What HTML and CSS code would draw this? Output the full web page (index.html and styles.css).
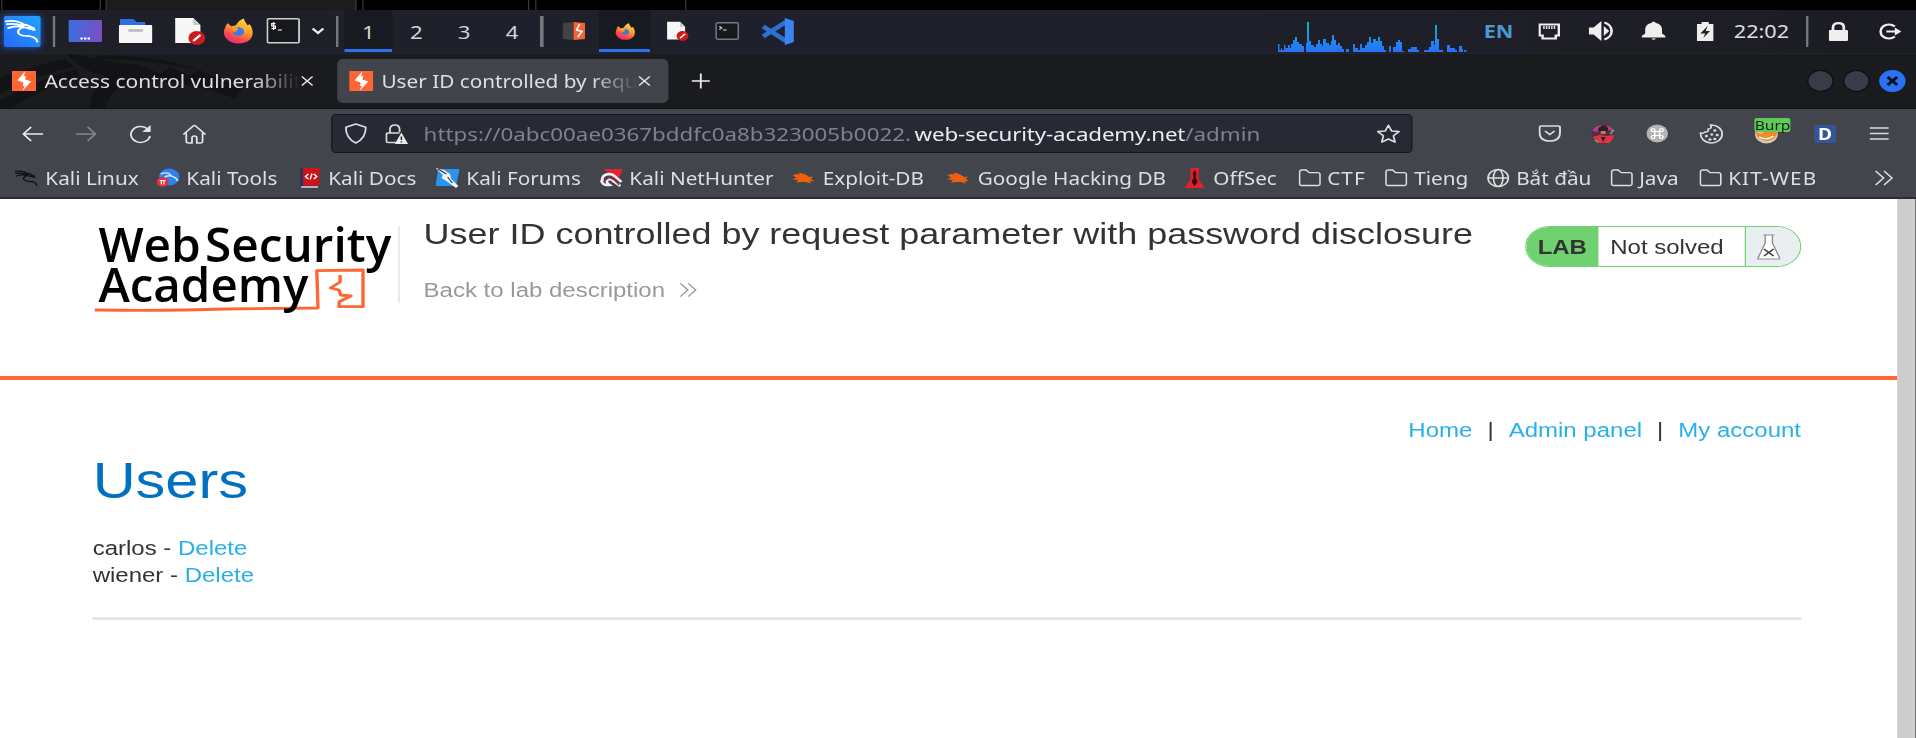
FILE: index.html
```
<!DOCTYPE html>
<html lang="en">
<head>
<meta charset="utf-8">
<title>User ID controlled by request parameter with password disclosure</title>
<link rel="stylesheet" href="styles.css">
</head>
<body>
<svg width="0" height="0" class="defs">
  <defs>
    <linearGradient id="flame" x1="0.8" y1="0" x2="0.3" y2="1"><stop offset="0" stop-color="#ffe04a"/><stop offset=".45" stop-color="#ff9a2c"/><stop offset=".75" stop-color="#ff4a48"/><stop offset="1" stop-color="#e02a78"/></linearGradient>
    <linearGradient id="desk" x1="0" y1="0" x2="1" y2="0"><stop offset="0" stop-color="#3a6fe0"/><stop offset="1" stop-color="#7b4fc0"/></linearGradient>
    <linearGradient id="kali" x1="1" y1="0" x2="0" y2="1"><stop offset="0" stop-color="#22a4ff"/><stop offset="1" stop-color="#2468f8"/></linearGradient>
    <linearGradient id="cpu" x1="0" y1="0" x2="0" y2="30" gradientUnits="userSpaceOnUse"><stop offset="0" stop-color="#12b3b8"/><stop offset=".6" stop-color="#1c8cf0"/><stop offset="1" stop-color="#2a6ff5"/></linearGradient>
    <symbol id="dragon" viewBox="0 0 30 24">
      <path d="M1 2C7 1 13 2 17 6M2 5C7 4 12 5 16 7M3 9C7 7 12 7 15 8M15 5C19 5 23 8 26 11L21 9.5C18 8 14 8 12 11C10 15 14 17 18 17C23 17 27 18 28 23M22 8L25 9" fill="none" stroke="currentColor" stroke-width="1.9" stroke-linecap="round"/>
    </symbol>
    <symbol id="firefox" viewBox="0 0 28 28">
      <path d="M5 6L8 9L12 8C14 4 16 2 19 1C19 4 21 5 22 8L24 7C29 15 27 27 14 27C4 27-1 17 3 10C3 9 4 7 5 6Z" fill="url(#flame)"/>
      <path d="M10 12C14 8 20 11 19 16C18 20 11 20 9 16L13 14Z" fill="#3a7bea"/>
      <path d="M8 10L13 9L14 13L9 14Z" fill="#ff9a2c"/>
    </symbol>
    <symbol id="note" viewBox="0 0 26 28">
      <path d="M1 1H16L22 8V26H1Z" fill="#f7f7f7"/><path d="M16 1V8H22Z" fill="#c9c9c9"/>
      <circle cx="19" cy="21" r="7" fill="#d0191c"/><path d="M16 24L22 18" stroke="#fff" stroke-width="2"/>
    </symbol>
    <symbol id="burp" viewBox="0 0 20 20">
      <path d="M0 0H20V20H0Z" fill="#ff6633"/>
      <path d="M11 0L4.500 9.500L9.500 11.500L9 15H10.500L8.500 20L16 10.500L11 8.500L11.500 5H10Z" fill="#fff"/>
    </symbol>
    <symbol id="folder" viewBox="0 0 19 18">
      <path d="M1 15V3Q1 1 3 1H6.5L9 3.6H16Q18 3.6 18 5.6V15Q18 16.5 16.5 16.5H2.5Q1 16.5 1 15Z" fill="none" stroke="#dededf" stroke-width="1.3"/>
    </symbol>
    <symbol id="bug" viewBox="0 0 18 16">
      <path d="M3 4L6 4.500L5 2.500L10 4L14 7L17 6.500L15.500 9L18 11.500L14.500 11L15.500 13.500L11 12L7 12L3 12.500L4.500 10L0 9.500L3 7.500L0 5.500Z" fill="#ee6010"/>
    </symbol>
    <symbol id="close" viewBox="0 0 12 12"><path d="M1.500 1.500L10.500 10.500M10.500 1.500L1.500 10.500" stroke="#e4e4e5" stroke-width="1.200"/></symbol>
    <symbol id="more" viewBox="0 0 16 16"><path d="M1 1L7.700 8L1 15M8 1L14.700 8L8 15" fill="none" stroke="currentColor" stroke-width="1.300"/></symbol>
  </defs>
</svg>
<div class="screen">
  <div class="strip"><i class="s1"></i><i class="s2"></i><i class="s3"></i><i class="s4"></i></div>

  <div class="panel">
    <div class="cell"><svg class="kali" width="31" height="31" viewBox="0 0 31 31"><path d="M0 0H31V31H0Z" fill="url(#kali)"/><use href="#dragon" x="1" y="1" width="29" height="28"/></svg></div>
    <div class="cell"><b class="sep"></b></div>
    <div class="cell"><svg width="28" height="22"><rect width="28" height="22" rx="1" fill="url(#desk)"/><path d="M10 18.500H18" stroke="#fff" stroke-width="2" stroke-dasharray="2 1"/></svg></div>
    <div class="cell"><svg width="28" height="26" viewBox="0 0 28 26"><path d="M1 1H12L15 4H22V10H1Z" fill="#2f6fe4"/><rect y="7" width="28" height="18" rx="1" fill="#f7f7f7"/><path d="M8 12.500H20" stroke="#b8b8b8" stroke-width="2.500"/></svg></div>
    <div class="cell"><svg width="26" height="28"><use href="#note"/></svg></div>
    <div class="cell"><svg width="27" height="28"><use href="#firefox"/></svg></div>
    <div class="cell"><svg width="28" height="26" viewBox="0 0 28 26"><rect x=".8" y=".8" width="26.400" height="24" rx="1" fill="#17181b" stroke="#d0d0d2" stroke-width="1.500"/><path d="M7.500 5.500H4.500V8H7.500V10.500H4.200M6 4V12M9.500 12H13" fill="none" stroke="#fff" stroke-width="1.100"/></svg></div>
    <div class="cell"><svg width="12" height="8"><path d="M1.500 1.500L6 6L10.500 1.500" fill="none" stroke="#eee" stroke-width="2"/></svg></div>
    <div class="cell"><b class="sep"></b></div>
    <div class="cell ws active">1</div>
    <div class="cell ws">2</div>
    <div class="cell ws">3</div>
    <div class="cell ws">4</div>
    <div class="cell"><b class="sep"></b></div>
    <div class="cell"><svg width="20" height="18"><path d="M1 1L10 0V18L1 17Z" fill="#424344"/><path d="M10 0L19.500 1V17L10 18Z" fill="#f96232"/><path d="M15 2L12.500 8L17 9.500L13.500 15" fill="none" stroke="#fff" stroke-width="1.400"/></svg></div>
    <div class="cell active"><svg width="18" height="19"><use href="#firefox"/></svg></div>
    <div class="cell"><svg width="19" height="20"><use href="#note"/></svg></div>
    <div class="cell"><svg width="20" height="18"><rect x=".7" y=".7" width="18.600" height="16.600" rx="1.500" fill="#17181b" stroke="#77787b" stroke-width="1.400"/><path d="M3.500 4.500L5.500 6L3.500 7.500M6.500 8H9.500" fill="none" stroke="#ddd"/></svg></div>
    <div class="cell"><svg width="28" height="27" viewBox="0 0 28 27"><path d="M2 8.500L21 23M2 18.500L21 4" stroke="#2c70d0" stroke-width="4.200"/><path d="M20 0L27.500 3V24L20 27Z" fill="#3a86ee"/></svg></div>
    <div class="cell"></div>
    <div class="cell start"><svg class="graph" viewBox="0 0 189 30" preserveAspectRatio="none"><path fill="url(#cpu)" d="M0 30V22H1.500V28H3V26H4V28H6V23H7.500V26H10V23H12V26H13V22H15V18H17V15H19V20H21V22H24V24H26V30H28V21H29V0H31V19H33V23H36V25H38V22H40V18H42V22H44V24H45V17H48V21H51V23H53V19H54V13H56V18H58V23H60V21H62V24H64V27H66V30H68V27H71V30H75V22H77V26H80V28H82V22H84V26H87V23H89V20H91V15H93V21H95V17H98V19H100V15H102V19H104V24H106V28H108V30H111V24H113V30H115V25H118V20H120V18H122V20H124V29H126V30H130V27H133V25H139V28H141V30H146V28H151V25H153V19H156V23H157V3H159V17H161V28H165V30H169V23H172V26H177V28H179V30H181V24H184V27H185V30H186V28H189V30Z"/></svg></div>
    <div class="cell lang">EN</div>
    <div class="cell"><svg width="18" height="17"><path d="M1 1.500H17V12.500H14.500V15.500H3.500V12.500H1Z" fill="none" stroke="#eee" stroke-width="2"/><path d="M4 4.500H14" stroke="#eee" stroke-width="3" stroke-dasharray="1.200 1"/></svg></div>
    <div class="cell"><svg width="22" height="20"><path d="M0 6.500H4L10.500 0V20L4 13.500H0Z" fill="#eee"/><path d="M12.500 5L17 10L12.500 15Z" fill="#eee"/><path d="M13 1.500A9 9 0 0 1 13 18.500" fill="none" stroke="#eee" stroke-width="2.200"/></svg></div>
    <div class="cell"><svg width="20" height="20" viewBox="-1 0 20 20"><path d="M-1 16.500V15L2 12.500V8Q2.500 3 7 2Q9-1 11 2Q15.500 3 16 8V12.500L19 15V16.500ZM7 17.500H11Q9 20 7 17.500Z" fill="#eee"/></svg></div>
    <div class="cell"><svg width="14" height="19"><path d="M0 2H4V0H10V2H14V19H0Z" fill="#eee"/><path d="M9 4L3 11.500H7L5.500 16L11 9H7.500Z" fill="#1e1f27"/></svg></div>
    <div class="cell clock">22:02</div>
    <div class="cell"><b class="sep"></b></div>
    <div class="cell"><svg width="16" height="19"><path d="M3.500 9V5.500Q3.500 1.200 8 1.200T12.500 5.500V9" fill="none" stroke="#eee" stroke-width="2.300"/><rect y="8" width="16" height="11" rx="1" fill="#eee"/></svg></div>
    <div class="cell"></div>
    <div class="cell"><svg width="19" height="17"><path d="M13 3.500A7 7 0 1 0 13 13.500" fill="none" stroke="#eee" stroke-width="2.200"/><path d="M6 8.500H14" stroke="#eee" stroke-width="2.200"/><path d="M13 4.500L18.500 8.500L13 12.500Z" fill="#eee"/></svg></div>
  </div>

  <div class="tabs">
    <svg class="backdrop" width="220" height="54" viewBox="0 0 220 54"><path d="M0 24Q26 12 54 5L62 13Q30 20 0 40ZM0 47Q32 25 64 15L66 22Q38 32 10 54H0ZM56 0Q66 16 88 22Q78 32 74 54H88Q92 34 112 26Q160 26 196 45L202 34Q184 26 166 16L158 22L142 13L134 20L116 11Q84 7 64 0ZM80 2Q130 0 164 16Q130 6 80 5Z" fill="#121317"/></svg>
    <div class="tab first"><svg class="fav" width="20" height="20"><use href="#burp"/></svg><span class="label">Access control vulnerabilit</span><svg width="12" height="12"><use href="#close"/></svg></div>
    <div></div>
    <div class="tab current"><svg class="fav" width="20" height="20"><use href="#burp"/></svg><span class="label">User ID controlled by requ</span><svg width="12" height="12"><use href="#close"/></svg></div>
    <div class="cell"><svg width="16" height="16"><path d="M8 .5V15.500M.5 8H15.500" stroke="#f0f0f0" stroke-width="1.500"/></svg></div>
    <div></div>
    <div class="cell"><i class="dot"></i></div>
    <div class="cell"><i class="dot"></i></div>
    <div class="cell"><i class="dot blue"><svg width="12" height="12"><path d="M2 2L10 10M10 2L2 10" stroke="#0c1120" stroke-width="2.600"/></svg></i></div>
    <div></div>
  </div>

  <div class="toolbar">
    <div class="cell"><svg width="18" height="16"><path d="M18 8H1.500M8 1L1.500 8L8 15" fill="none" stroke="#ececec" stroke-width="1.500"/></svg></div>
    <div class="cell"><svg width="18" height="16"><path d="M0 8H16.500M10 1L16.500 8L10 15" fill="none" stroke="#85868b" stroke-width="1.500"/></svg></div>
    <div class="cell"><svg width="20" height="20"><path d="M15.500 4.500A8 8 0 1 0 18 12" fill="none" stroke="#e4e4e5" stroke-width="1.500"/><path d="M18.500 1V8H11.500Z" fill="#e4e4e5"/></svg></div>
    <div class="cell"><svg width="20" height="20"><path d="M.8 10.500L9 2Q10 1 11 2L19.200 10.500M3.200 9V17Q3.200 19 5 19H8V14Q8 12 10 12T12 14V19H15Q16.800 19 16.800 17V9" fill="none" stroke="#e4e4e5" stroke-width="1.500"/></svg></div>
    <div></div>
    <div class="urlbar">
      <div class="cell"><svg width="19" height="21"><path d="M9.500 1L17.800 4.200Q18 15 9.500 20Q1 15 1.200 4.200Z" fill="none" stroke="#dcdcde" stroke-width="1.500" stroke-linejoin="round"/></svg></div>
      <div class="cell"><svg width="19" height="20"><path d="M4 9V5.500Q4 1 8 1T12 5.500V8M9 18.500H2.500Q1 18.500 1 17V10.500Q1 9 2.500 9H12" fill="none" stroke="#dcdcde" stroke-width="1.500"/><path d="M13.500 8.500L19 20H8Z" fill="#eee"/><path d="M13.500 12.500V16M13.500 17.200V18.600" stroke="#272935" stroke-width="1.300"/></svg></div>
      <div class="url">https://0abc00ae0367bddfc0a8b323005b0022.<b>web-security-academy.net</b>/admin</div>
      <div class="cell"><svg width="20" height="20"><path d="M10 1.200L12.600 6.900L18.800 7.600L14.200 11.800L15.500 18.200L10 15L4.500 18.200L5.800 11.800L1.200 7.600L7.400 6.900Z" fill="none" stroke="#dcdcde" stroke-width="1.500" stroke-linejoin="round"/></svg></div>
    </div>
    <div></div>
    <div class="cell"><svg width="19" height="17"><path d="M2.500 1H16.500Q18 1 18 2.500V7.500Q18 16 9.500 16T1 7.500V2.500Q1 1 2.500 1ZM5.500 6L9.500 9.500L13.500 6" fill="none" stroke="#dcdcde" stroke-width="1.600"/></svg></div>
    <div class="cell"><svg width="20" height="20" viewBox="0 0 20 20"><circle cx="10" cy="10" r="9.800" fill="#5a2a48"/><path d="M1 7Q3 1 9 1L5 8ZM13 1Q19 4 19 8L14 6Z" fill="#b0407c"/><path d="M1 13L7 11L13 12L19 11Q19 15 15 19H5Z" fill="#e23140"/><path d="M8 5H12V10H8Z" fill="#b97a66"/><path d="M6 4Q10 0 14 4V7H6ZM8 13H12L10 18Z" fill="#2c1d26"/><path d="M16 10L19 6M3 16L6 18" stroke="#43b77c" stroke-width="1.500"/></svg></div>
    <div class="cell"><svg width="18" height="19" viewBox="0 0 18 18"><circle cx="9" cy="9" r="9" fill="#b4b4b4"/><path d="M7 7H11V11H7ZM7 7V5.500A1.500 1.500 0 1 0 5.500 7H7ZM11 7H12.500A1.500 1.500 0 1 0 11 5.500ZM11 11V12.500A1.500 1.500 0 1 0 12.500 11ZM7 11H5.500A1.500 1.500 0 1 0 7 12.500Z" fill="none" stroke="#fff" stroke-width="1.200"/></svg></div>
    <div class="cell"><svg width="20" height="20"><path d="M9.500 1A9 9 0 1 1 1.200 9Q3.500 10 4.500 8Q8 8.500 7.500 5Q11 5 9.500 1Z" fill="none" stroke="#dcdcde" stroke-width="1.500"/><g fill="#dcdcde"><circle cx="13" cy="6.500" r="1.300"/><circle cx="6" cy="12" r="1.300"/><circle cx="10.500" cy="10.500" r="1.200"/><circle cx="15" cy="11" r="1.300"/><circle cx="9" cy="15.500" r="1.300"/><circle cx="13" cy="15" r="1.300"/></g></svg></div>
    <div class="cell"><div class="proxy"><svg width="20" height="20"><circle cx="10" cy="10" r="9.500" fill="#d7c6aa"/><path d="M1 8L6 10L10 6L19 8Q19 15 10 17Q2 16 1 8Z" fill="#ef8a28"/><path d="M4 13Q10 17 16 12" fill="none" stroke="#fff" stroke-width="1.500"/></svg><span class="badge">Burp</span></div></div>
    <div class="cell"><span class="dmark">D</span></div>
    <div class="cell"><svg width="16" height="13"><path d="M0 1H16M0 6.500H16M0 12H16" stroke="#dcdcde" stroke-width="1.400"/></svg></div>
    <div></div>
  </div>

  <div class="bookmarks">
    <div class="bm"><svg class="ink" width="20" height="20"><use href="#dragon"/></svg><span>Kali Linux</span></div>
    <div class="bm"><svg width="20" height="20"><circle cx="11" cy="9" r="8.500" fill="#2f80ee"/><path d="M4 6Q10 3 13 8Q8 7 7 10M12 8Q17 9 18 13" fill="none" stroke="#cfe4ff" stroke-width="1.400"/><circle cx="5.500" cy="14" r="5" fill="#e03038"/><path d="M3 12.500H8M4.500 12.500V16.500M6.700 12.500V16.500" stroke="#fff"/></svg><span>Kali Tools</span></div>
    <div class="bm docs"><svg width="17" height="20"><path d="M0 0H4V18H0Z" fill="#28325e"/><path d="M2.500 0H16V17.500H2.500Z" fill="#d0131a"/><path d="M1 19H15" stroke="#ddd" stroke-width="1.500"/><path d="M7 6L4.500 8.500L7 11M11.500 6L14 8.500L11.500 11M10 5.500L8.500 11.500" fill="none" stroke="#fff" stroke-width="1.200"/></svg><span>Kali Docs</span></div>
    <div class="bm"><svg width="20" height="20"><path d="M2 1H20L17 18H0Z" fill="#2796f3"/><path d="M0 0L7 2L12 6L13 11L19 18L17 20L9 13L5 10L6 7Z" fill="#f4f4f4"/><path d="M2 1L9 6M10 9L14 15" stroke="#333"/></svg><span>Kali Forums</span></div>
    <div class="bm"><svg width="20" height="20"><path d="M4 1H20L16 13L11 8Z" fill="#e2232f"/><path d="M3 13Q2 7 8 6Q12 6 15 10L19 14M2 12Q3 18 9 17Q5 14 8 11Q11 11 13 14L18 18" fill="none" stroke="#f1f1f1" stroke-width="2.300"/><path d="M6 12Q8 8 13 12L17 17" fill="none" stroke="#b3132e" stroke-width="1.200"/></svg><span>Kali NetHunter</span></div>
    <div class="bm exploit"><svg width="19" height="16"><use href="#bug"/></svg><span>Exploit-DB</span></div>
    <div class="bm exploit"><svg width="19" height="16"><use href="#bug"/></svg><span>Google Hacking DB</span></div>
    <div class="bm exploit"><svg width="17" height="20"><path d="M5 0H12V12L17 20H0L5 12Z" fill="#e0202a"/><path d="M8.500 2L10 5L9.500 10L11 14L8.500 18L6 14L7.500 10L7 5Z" fill="#3a0a10"/></svg><span>OffSec</span></div>
    <div class="bm wide"><svg width="19" height="18"><use href="#folder"/></svg><span>CTF</span></div>
    <div class="bm"><svg width="19" height="18"><use href="#folder"/></svg><span>Tieng</span></div>
    <div class="bm"><svg width="19" height="20"><g fill="none" stroke="#dededf" stroke-width="1.400"><circle cx="9.500" cy="10" r="8.500"/><ellipse cx="9.500" cy="10" rx="4" ry="8.500"/><path d="M1 10H18"/></g></svg><span>Bắt đầu</span></div>
    <div class="bm"><svg width="19" height="18"><use href="#folder"/></svg><span>Java</span></div>
    <div class="bm wide"><svg width="19" height="18"><use href="#folder"/></svg><span>KIT-WEB</span></div>
    <div class="bm more"><svg width="16" height="16"><use href="#more"/></svg></div>
  </div>

  <div class="view">
    <main>
      <header>
        <svg class="logo" width="250" height="92" viewBox="0 0 250 92">
          <path d="M0 84Q60 85 110 83L186 82L185 44.700L223.500 44V80.700H203.600V75.700L213.500 70L204.700 69L203.600 64L196.400 62L204.400 56V49" fill="none" stroke="#ff6633" stroke-width="2.800" stroke-linejoin="round"/>
          <text class="top" x="3" y="36" textLength="244" lengthAdjust="spacingAndGlyphs">Web Security</text>
          <text x="3" y="76" textLength="175" lengthAdjust="spacingAndGlyphs">Academy</text>
        </svg>
        <div class="heading">
          <h2>User ID controlled by request parameter with password disclosure</h2>
          <a class="back">Back to lab description <svg width="15" height="16"><use href="#more"/></svg></a>
        </div>
        <div class="status"><b>LAB</b><span>Not solved</span><i><svg width="20" height="26"><path d="M5.500 1H14.500M7 1V9L1 24V25H19V24L13 9V1" fill="#fff" stroke="#8b8f92" stroke-width="1.200"/><path d="M6 15L14 22M14 15L6 22" stroke="#444" stroke-width="1.600"/></svg></i></div>
      </header>
      <div class="content">
        <nav><a>Home</a><span>|</span><a>Admin panel</a><span>|</span><a>My account</a></nav>
        <h1>Users</h1>
        <div class="user">carlos - <a>Delete</a></div>
        <div class="user">wiener - <a>Delete</a></div>
        <hr>
      </div>
    </main>
    <div class="scroll"></div>
  </div>
</div>
</body>
</html>
```
FILE: styles.css
```
* { box-sizing: border-box; }
body { margin: 0; overflow: hidden; background: #fff; }
svg { display: block; flex: none; }
.defs { position: absolute; }

.screen {
  width: 1596.67px; height: 738px; overflow: hidden;
  transform: scaleX(1.2); transform-origin: 0 0;
  display: flex; flex-direction: column;
  font-family: "Noto Sans", sans-serif; color: #dfdfe0;
}
.cell { display: flex; align-items: center; justify-content: center; min-width: 0; white-space: nowrap; }
.start { justify-content: flex-start; }

.strip { height: 10px; flex: none; background: #000; display: grid; grid-template-columns: 101fr 5fr 250fr 6fr 167fr 6fr 152fr 1229fr; }
.strip i { border: 1px solid #3a3a3a; border-width: 0 1px; }
.strip .s1 { grid-column: 1; margin-left: 1px; }
.strip .s2 { grid-column: 3; background: #1c1c1c; }
.strip .s3 { grid-column: 5; }
.strip .s4 { grid-column: 7; }

.panel {
  height: 44px; flex: none; display: grid; padding-bottom: 1px;
  background: linear-gradient(90deg, #1e1f27, #1e212d 40%, #1e1f28 75%, #1b1c23);
  border-bottom: 1px solid #24262d;
  grid-template-columns: 45fr 18fr 45fr 56fr 51fr 46fr 44fr 26fr 13fr 49fr 47fr 48fr 48fr 12fr 51fr 52fr 52fr 48fr 53fr 474fr 195fr 51fr 50fr 56fr 48fr 54fr 59fr 32fr 32fr 11fr 50fr;
}
.panel .active { background: #171a21; box-shadow: inset 0 -3px #2a72f0; }
.kali { color: #fff; box-shadow: 0 0 6px #1d5fd0; border-radius: 2px; }
.sep { width: 2.500px; height: 31px; background: #77787c; }
.ws { font-size: 18.500px; color: #d5d5d6; }
.graph { width: 157.500px; height: 30px; margin-top: 12px; }
.lang { font: bold 18px "Noto Sans", sans-serif; color: #4a9ad4; }
.clock { font-size: 18px; }

.tabs {
  height: 55px; flex: none; position: relative; display: grid;
  background: #1a1b1f; border-bottom: 1px solid #0f1013;
  grid-template-columns: 325fr 12fr 331fr 65fr 1069fr 36fr 36fr 36fr 6fr;
}
.backdrop { position: absolute; left: 0; top: 0; }
.tab { position: relative; display: flex; align-items: center; min-width: 0; padding: 0 9px 0 10px; }
.tab.current { background: #42444b; border-radius: 5px; margin: 5px 0; padding: 0 14px 0 10px; }
.tab .label {
  flex: 1; min-width: 0; margin-left: 7px; white-space: nowrap; font-size: 17.500px;
  -webkit-mask-image: linear-gradient(90deg, #000 82%, transparent);
  mask-image: linear-gradient(90deg, #000 82%, transparent);
}
.tab.current .label { font-size: 17.300px; }
.dot { width: 22px; height: 22px; border-radius: 50%; background: #383c48; border: 1px solid #0c0d10; display: flex; align-items: center; justify-content: center; }
.dot.blue { background: #2a72f3; border-color: #2a72f3; }

.toolbar {
  height: 50px; flex: none; display: grid; padding: 5px 0 6px; background: #43454c;
  grid-template-columns: 65fr 43fr 66fr 40fr 117fr 1082fr 110fr 53fr 54fr 55fr 53fr 56fr 62fr 46fr 14fr;
}
.urlbar { display: grid; min-width: 0; background: #272935; border: 1px solid #17181d; border-radius: 4px; grid-template-columns: 47fr 35fr 952fr 48fr; }
.url { display: flex; align-items: center; min-width: 0; padding-left: 8px; font-size: 18.630px; white-space: nowrap; color: #80818a; }
.url b { font-weight: 400; color: #ededee; letter-spacing: -.13px; margin-left: 3px; }
.proxy { position: relative; }
.badge { position: absolute; left: 1px; top: -6px; width: 30px; height: 14px; line-height: 14px; background: #5fc95a; color: #132513; font-size: 13px; text-align: center; border-radius: 2px; }
.proxy svg { margin-left: 1px; }
.dmark { width: 18px; height: 18px; line-height: 18px; text-align: center; background: #35549a; color: #fff; font-weight: 700; font-size: 16px; border-radius: 2px; }

.bookmarks {
  height: 40px; flex: none; display: grid; align-items: center; background: #43454c; border-bottom: 2px solid #2b2c31;
  grid-template-columns: 15fr 141fr 144fr 136fr 163fr 193fr 155fr 238fr 113fr 87fr 102fr 123fr 89fr 175fr 42fr;
}
.bm:first-child { grid-column: 2; }
.bm { display: flex; align-items: center; gap: 5.300px; min-width: 0; white-space: nowrap; font-size: 17.300px; color: #dfdfe0; }
.bm.docs { gap: 6.500px; }
.bm.exploit { gap: 6.600px; }
.bm.wide { letter-spacing: .9px; }
.ink { color: #101114; }

.view { flex: 1; min-height: 0; display: flex; background: #fff; font-family: "Liberation Sans", Arial, sans-serif; color: #333; }
main { flex: 1; min-width: 0; }
.scroll { width: 15.800px; background: #cdcdcd; border-right: 1px solid #606060; }
header { height: 181px; border-bottom: 4px solid #ff6633; display: flex; padding: 0 80px 0 77.500px; }
.logo { margin: 27px 0 0 1px; overflow: visible; }
.logo text { font: 600 47px "Open Sans", sans-serif; fill: #000; }
.logo .top { word-spacing: -8px; }
.heading { margin: 27px 0 0 3px; height: 77px; border-left: 1px solid #ddd; padding-left: 20.500px; width: 920px; }
h2 { margin: -10px 0 0; font-weight: 400; font-size: 29.980px; line-height: 36px; white-space: nowrap; }
.back { display: flex; align-items: center; gap: 12px; margin-top: 26px; height: 24px; font-size: 20px; color: #999; }
.status { margin: 27px 0 0 auto; width: 230px; height: 41px; flex: none; border: 1px solid #70d26e; border-radius: 21px; overflow: hidden; display: grid; grid-template-columns: 60.500px 1fr 46px; font-size: 20px; line-height: 40px; }
.status b { background: #70d26e; padding-left: 9.500px; }
.status span { padding-left: 9.500px; }
.status i { background: #e9eef1; border-left: 1px solid #70d26e; display: flex; align-items: center; padding-left: 9px; }
.content { padding: 0 80px 0 77.200px; }
nav { display: flex; justify-content: flex-end; gap: 12.500px; padding-top: 38px; font-size: 20px; line-height: 24px; }
a { color: #29b0e8; }
h1 { margin: 15px 0 29.500px; font-weight: 400; font-size: 49.600px; line-height: 48px; color: #0070c0; }
.user { font-size: 20px; line-height: 27.500px; }
hr { margin: 27.500px 0 0; border: 0; height: 3px; background: #e6e6e6; }
```
